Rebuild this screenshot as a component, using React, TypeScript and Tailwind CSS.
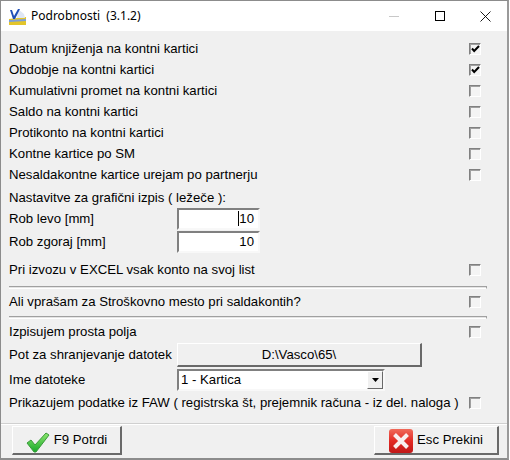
import { ReactNode } from "react";

const raisedBorder = "border border-t-white border-l-white border-r-[#696969] border-b-[#696969]";
const sunkenBorder = "border-2 border-t-[#808080] border-l-[#808080] border-r-[#f8f8f8] border-b-[#f8f8f8]";

const Check = ({ checked }: { checked?: boolean }) => (
  <div className="w-[12px] h-[12px] border border-t-[#808080] border-l-[#808080] border-r-white border-b-white shadow-[inset_1px_1px_0_#a0a0a0] bg-[#f4f4f4] flex items-center justify-center">
    {checked && (
      <svg width="9" height="8" viewBox="0 0 9 8">
        <path d="M1 3.5 L3.2 6 L8 1" fill="none" stroke="#000" strokeWidth="2" />
      </svg>
    )}
  </div>
);

const Row = ({ label, checked, h = "h-[21px]" }: { label: string; checked?: boolean; h?: string }) => (
  <div className={`flex items-center justify-between ${h}`}>
    <span>{label}</span>
    <Check checked={checked} />
  </div>
);

const Separator = ({ m }: { m: string }) => (
  <div className={`h-[3px] border-t border-t-[#a0a0a0] border-b border-b-white border-r border-r-[#a0a0a0] mr-[-6px] bg-[#e4e4e4] ${m}`} />
);

const Field = ({ label, h = "h-[23px]", children }: { label: string; h?: string; children: ReactNode }) => (
  <div className={`flex items-center ${h}`}>
    <span className="w-[168px]">{label}</span>
    {children}
  </div>
);

const NumberInput = ({ caret }: { caret?: boolean }) => (
  <div className={`w-[83px] h-[22px] bg-white ${sunkenBorder} flex items-center justify-end pr-[4px]`}>
    {caret && <div className="w-px h-[15px] bg-black" />}
    10
  </div>
);

export default function App() {
  return (
    <div className="w-[510px] h-[460px] bg-white overflow-hidden font-['Liberation_Sans',Arial,sans-serif] text-[13.2px] text-black">
      <div className="w-[509px] h-[460px] border-t border-l border-t-[#8c8c8c] border-l-[#8c8c8c] border-r-2 border-r-[#9a9a9a] border-b-2 border-b-[#8c8c8c] flex flex-col bg-[#f0f0f0]">
        {/* title bar */}
        <div className="h-[30px] bg-white flex items-center shrink-0 pl-[8px]">
          <svg width="17" height="17" viewBox="0 0 17 17" className="mr-[5px]">
            <path d="M0 11 L17 9 L17 17 L0 17Z" fill="#e3c52a" />
            <path d="M0 12 L17 11 L17 13 L0 14Z" fill="#7d9ed8" />
            <path d="M9 1 L15 6 L16 10 L8 10Z" fill="#dfe6f4" />
            <path d="M1 2 L3 2 L5 8 L9 1 L11 1 L6 11 L4 11Z" fill="#1f4fb8" />
          </svg>
          <span className="font-['Noto_Sans',sans-serif] text-[12px]">Podrobnosti&nbsp; (3.1.2)</span>
          <div className="ml-auto flex items-center">
            <div className="w-[46px] flex justify-center"><div className="w-[10px] h-px bg-[#c8c8c8]" /></div>
            <div className="w-[46px] flex justify-center"><div className="w-[10px] h-[10px] border border-black" /></div>
            <div className="w-[44px] flex justify-center">
              <svg width="11" height="11" viewBox="0 0 11 11"><path d="M0.5 0.5 L10.5 10.5 M10.5 0.5 L0.5 10.5" stroke="#000" strokeWidth="0.9" /></svg>
            </div>
          </div>
        </div>

        {/* form */}
        <div className="flex-1 pl-[8px] pr-[26px] pt-[7px] flex flex-col">
          <Row label="Datum knjiženja na kontni kartici" checked />
          <Row label="Obdobje na kontni kartici" checked />
          <Row label="Kumulativni promet na kontni kartici" />
          <Row label="Saldo na kontni kartici" />
          <Row label="Protikonto na kontni kartici" />
          <Row label="Kontne kartice po SM" />
          <Row label="Nesaldakontne kartice urejam po partnerju" />

          <div className="h-[18px] mt-[4px] flex items-center">Nastavitve za grafični izpis ( ležeče ):</div>
          <Field label="Rob levo [mm]"><NumberInput caret /></Field>
          <Field label="Rob zgoraj [mm]"><NumberInput /></Field>

          <Row label="Pri izvozu v EXCEL vsak konto na svoj list" h="h-[24px] mt-[5px]" />
          <Separator m="mt-[4px]" />
          <Row label="Ali vprašam za Stroškovno mesto pri saldakontih?" h="h-[26px]" />
          <Separator m="mt-[1px]" />
          <Row label="Izpisujem prosta polja" h="h-[24px] mt-[1px]" />

          <div className="mt-[-1px]">
            <Field label="Pot za shranjevanje datotek" h="h-[24px]">
              <div className={`w-[245px] h-[24px] ${raisedBorder} border-r-2 border-b-2 bg-[#f0f0f0] flex items-center justify-center`}>D:\Vasco\65\</div>
            </Field>
          </div>
          <div className="mt-[1px]">
            <Field label="Ime datoteke" h="h-[24px]">
              <div className={`w-[208px] h-[22px] bg-white ${sunkenBorder} flex items-center justify-between pl-[2px]`}>
                <span>1 - Kartica</span>
                <div className={`w-[16px] h-[18px] ${raisedBorder} bg-[#f0f0f0] flex items-center justify-center`}>
                  <svg width="7" height="4" viewBox="0 0 7 4"><path d="M0 0 H7 L3.5 4Z" fill="#000" /></svg>
                </div>
              </div>
            </Field>
          </div>
          <Row label="Prikazujem podatke iz FAW ( registrska št, prejemnik računa - iz del. naloga )" h="h-[22px]" />
        </div>

        {/* footer */}
        <div className="h-[35px] border-t border-t-[#d0d0d0] shadow-[inset_0_1px_0_#fff] flex items-start justify-between pl-[11px] pr-[8px] pt-[2px] shrink-0">
          <button className={`w-[110px] h-[29px] ${raisedBorder} border-r-2 border-b-2 flex items-center justify-center gap-[4px]`}>
            <svg width="24" height="21" viewBox="0 0 24 21" className="mt-[4px]">
              <defs>
                <linearGradient id="okFill" x1="0" y1="0" x2="0" y2="1">
                  <stop offset="0" stopColor="#8fe86f" />
                  <stop offset="1" stopColor="#17a82a" />
                </linearGradient>
              </defs>
              <path d="M1 11 L5 8 L9 13 L20 1 L23 3 L10 20 L8 20Z" fill="url(#okFill)" stroke="#3a9a3a" strokeWidth="1" strokeLinejoin="round" />
            </svg>
            <span>F9 Potrdi</span>
          </button>
          <button className={`w-[125px] h-[29px] ${raisedBorder} border-r-2 border-b-2 flex items-center justify-center gap-[4px]`}>
            <svg width="24" height="24" viewBox="0 0 24 24" className="mt-[1px]">
              <defs>
                <linearGradient id="noFill" x1="0" y1="0" x2="0" y2="1">
                  <stop offset="0" stopColor="#f06a5a" />
                  <stop offset="0.5" stopColor="#e22a24" />
                  <stop offset="1" stopColor="#c01818" />
                </linearGradient>
              </defs>
              <rect x="0" y="0" width="24" height="24" rx="3" fill="url(#noFill)" />
              <path d="M5.5 5.5 L18.5 18.5 M18.5 5.5 L5.5 18.5" stroke="#f8efef" strokeWidth="4" />
            </svg>
            <span>Esc Prekini</span>
          </button>
        </div>
      </div>
    </div>
  );
}
